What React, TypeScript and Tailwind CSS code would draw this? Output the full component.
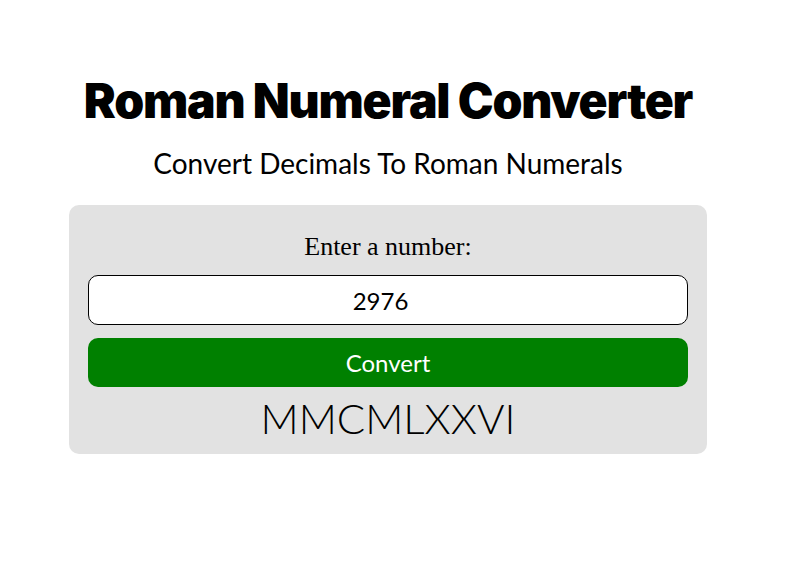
import React from 'react';

export default function App() {
  return (
    <div className="min-h-screen bg-white text-black">
      <div className="ml-[69px] w-[638px] pt-[71px] flex flex-col items-center">
        <h1 className="font-['Inter',sans-serif] font-black text-[48px] leading-[60px] tracking-[-1.2px] whitespace-nowrap">
          Roman Numeral Converter
        </h1>
        <p className="mt-[15px] font-['Lato',sans-serif] text-[28px] leading-[34px]">
          Convert Decimals To Roman Numerals
        </p>
        <div className="mt-[25px] w-full bg-[#e2e2e2] rounded-[10px] px-[19px] pt-[27px] pb-[11px] flex flex-col items-center">
          <label className="font-['Liberation_Serif',serif] text-[26px] leading-[30px]">
            Enter a number:
          </label>
          <input
            type="number"
            defaultValue="2976"
            className="mt-[13px] w-full h-[50px] bg-white border border-black rounded-[10px] text-center font-['Lato',sans-serif] text-[24px] outline-none"
          />
          <button className="mt-[13px] w-full h-[49px] bg-[#008000] text-white rounded-[10px] font-['Lato',sans-serif] text-[24px]">
            Convert
          </button>
          <div className="mt-[6px] font-['Lato',sans-serif] font-light text-[42px] leading-[50px]">
            MMCMLXXVI
          </div>
        </div>
      </div>
    </div>
  );
}
